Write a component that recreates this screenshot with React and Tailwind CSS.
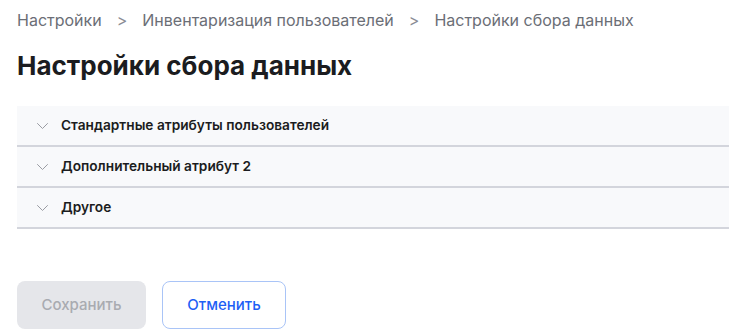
import { useState } from 'react';

const sections = [
  'Стандартные атрибуты пользователей',
  'Дополнительный атрибут 2',
  'Другое',
];

function Chevron() {
  return (
    <svg width="11" height="6" viewBox="0 0 11 6" fill="none" className="shrink-0">
      <path d="M0.5 0.5L5.5 5.5L10.5 0.5" stroke="#9a9ca3" strokeWidth="1" strokeLinecap="round" strokeLinejoin="round" />
    </svg>
  );
}

export default function App() {
  const [open, setOpen] = useState(null);

  return (
    <div className="min-h-screen bg-white px-[17px] pt-[9px] font-['Inter',sans-serif]">
      {/* Breadcrumbs */}
      <nav className="flex items-center gap-[15px] text-[16px] leading-[22px] text-[#6b6e76]">
        <span>Настройки</span>
        <span className="text-[#8a8d95]">&gt;</span>
        <span>Инвентаризация пользователей</span>
        <span className="text-[#8a8d95]">&gt;</span>
        <span>Настройки сбора данных</span>
      </nav>

      <h1 className="mt-[18px] text-[26px] leading-[34px] font-bold text-[#1b1c20]">
        Настройки сбора данных
      </h1>

      {/* Accordion */}
      <div className="mt-[23px] w-[712px]">
        {sections.map((s, i) => (
          <button
            key={s}
            onClick={() => setOpen(open === i ? null : i)}
            className="flex h-[41px] w-full items-center gap-[13px] border-b-2 border-[#d3d5dc] bg-[#f8f9fb] pl-[20px] text-left"
          >
            <Chevron />
            <span className="text-[13.7px] font-semibold text-[#1b1c20]">{s}</span>
          </button>
        ))}
      </div>

      {/* Actions */}
      <div className="mt-[52px] flex gap-[16px]">
        <button
          disabled
          className="h-[48px] w-[129px] rounded-[8px] bg-[#e5e6ea] text-[15px] font-medium text-[#a9abb1]"
        >
          Сохранить
        </button>
        <button className="h-[48px] w-[124px] rounded-[8px] border border-[#a9c4f7] bg-white text-[15px] font-medium text-[#1d5ff5]">
          Отменить
        </button>
      </div>
    </div>
  );
}
